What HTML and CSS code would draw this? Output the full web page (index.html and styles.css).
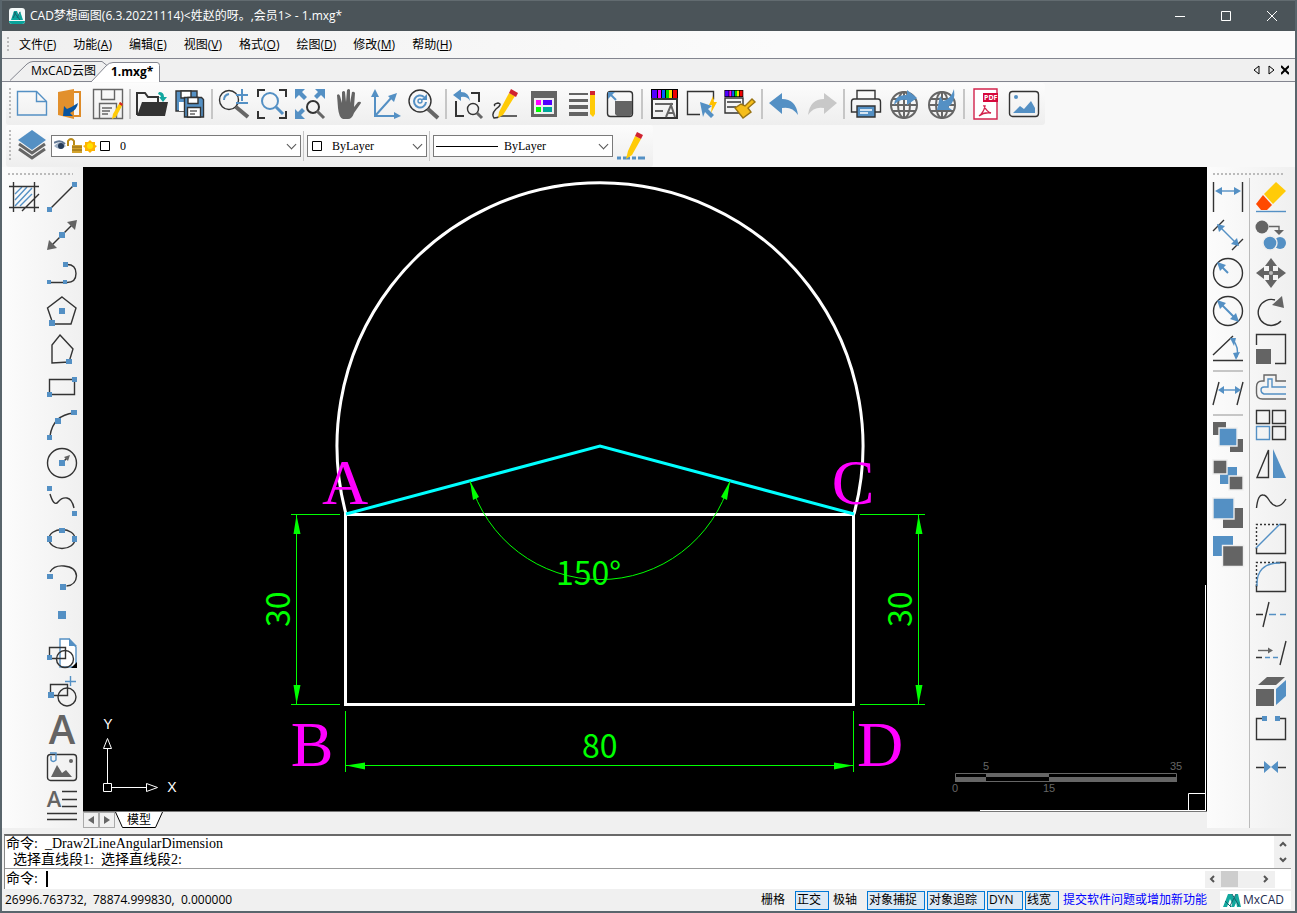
FILE: index.html
```html
<!DOCTYPE html>
<html lang="zh-CN">
<head>
    <meta charset="UTF-8">
    <meta name="viewport" content="width=device-width, initial-scale=1.0">
    <title>CAD梦想画图</title>
    <link rel="stylesheet" href="styles.css">
</head>
<body>

    <header class="titlebar">
        <svg class="app-icon" viewBox="0 0 16 16"><rect width="16" height="16" rx="3" fill="#f4f8f8"/><path d="M2 12L5 3h3l2 5 1-5 3 9z" fill="#0aa39b"/><path d="M4 10l3-6M8 10l3-6M5 4l6 8" stroke="#17606b"/><path d="M0 13h16a3 3 0 0 1-3 3H3a3 3 0 0 1-3-3z" fill="#0aa39b"/></svg>
        <h1>CAD梦想画图(6.3.20221114)&lt;姓赵的呀。,会员1&gt; - 1.mxg*</h1>
        <div class="window-buttons">
            <button aria-label="最小化"><svg viewBox="0 0 12 12"><path d="M1 6.5h10"/></svg></button>
            <button aria-label="最大化"><svg viewBox="0 0 12 12"><path d="M1.5 1.5h9v9h-9z"/></svg></button>
            <button aria-label="关闭"><svg viewBox="0 0 12 12"><path d="M1 1l10 10M11 1L1 11"/></svg></button>
        </div>
    </header>

    <nav class="menubar">
        <span class="grip"></span>
        <button>文件(<u>F</u>)</button>
        <button>功能(<u>A</u>)</button>
        <button>编辑(<u>E</u>)</button>
        <button>视图(<u>V</u>)</button>
        <button>格式(<u>O</u>)</button>
        <button>绘图(<u>D</u>)</button>
        <button>修改(<u>M</u>)</button>
        <button>帮助(<u>H</u>)</button>
    </nav>

    <div class="tabs">
        <button class="tab"><svg viewBox="0 0 97 20"><path d="M0 19.5L17 3q3-2.500 6-2.500h69l5 4" fill="#f0f0f0"/></svg><span>MxCAD云图</span></button>
        <button class="tab active"><svg viewBox="0 0 71 20"><path d="M0 20L15 4q3-3.500 7-3.500h44q2.500 0 2.500 3v16.500" fill="#fff"/></svg><span>1.mxg*</span></button>
        <div class="tab-tools">
            <button aria-label="上一个"><svg viewBox="0 0 8 10"><path d="M6 1v8L1 5z"/></svg></button>
            <button aria-label="下一个"><svg viewBox="0 0 8 10"><path d="M2 1v8l5-4z"/></svg></button>
            <button aria-label="关闭标签"><svg viewBox="0 0 8 10"><path d="M0 1l8 8M8 1L0 9" stroke-width="2"/></svg></button>
        </div>
    </div>

    <!-- Barra principal -->
    <div class="toolbars">
        <div class="toolbar">
            <span class="grip"></span>
            <button aria-label="新建"><svg viewBox="0 0 30 30"><path class="bl" fill="#fff" d="M.5 2.500h19l10 10v13.500H.5z"/><path class="bl" d="M19.500 2.500v10h10"/></svg></button>
            <button aria-label="打开"><svg viewBox="0 0 30 30"><path d="M19 3h6v24h-8" fill="#f7f7f7" stroke="#de8b28" stroke-width="2"/><path d="M3 3L19 0v30L3 26z" fill="#e2902d"/><path d="M23 14q-1 7-8 10l3 3-10 0 1-10 3 3q5-2 11-6z" fill="#07549f"/></svg></button>
            <button aria-label="保存"><svg viewBox="0 0 30 30"><path class="gl" d="M.5.5h29v29H.5zM8.500.500v10h13v-10M6.500 29.500v-15h17v15M9 19h10M9 22h8M9 25h6"/><path d="M27 13l3 2-7 13-4 2 1-5z" fill="#ffcb08"/><path d="M27 13l3 2-1 2-3-2z" fill="#d02330"/></svg></button>
            <span class="sep"></span>
            <button aria-label="打开云图"><svg viewBox="0 0 30 30"><path class="kl thick" d="M0 26V4h8l3 4h10v5"/><path d="M5 13h26l-3 14H0z" fill="#333"/><path d="M22 3q5 0 5 5h3l-4 5-4-5h2q0-2-3-3z" fill="#11a7a0"/></svg></button>
            <button aria-label="另存为"><svg viewBox="0 0 30 30"><path class="b" stroke="#333" d="M1 2h21v20H1z"/><path d="M6 2h10v7H6z" fill="#fff" stroke="#333"/><path d="M4 13h6v9H4z" fill="#fff"/><path class="b" stroke="#333" d="M9.500 8.500h17l2 2V28h-19z"/><path fill="#fff" stroke="#333" d="M13 8.500h10v6H13zM12.500 18.500h13V28h-13z"/><path class="gl" d="M15 22h7M15 25h5"/></svg></button>
            <span class="sep"></span>
            <button aria-label="缩放"><svg viewBox="0 0 30 30"><circle class="kl" cx="10" cy="11" r="9.500"/><path d="M17 18l12 10" stroke="#666" stroke-width="4"/><path class="bl" stroke-width="2" d="M5 11q0-5 5-6M17 6h12M23 0v12M17 14h12"/></svg></button>
            <button aria-label="窗口缩放"><svg viewBox="0 0 30 30"><path class="kl thick" d="M1 8V1h7M22 1h7v7M29 22v7h-7M8 29H1v-7"/><circle class="bl" stroke-width="2" cx="13" cy="12" r="8"/><path class="bl" stroke-width="3" d="M19 18l7 7"/></svg></button>
            <button aria-label="全部显示"><svg viewBox="0 0 30 30"><path class="b" d="M0 0h10L7 3l5 5-3 3-5-5-4 4zM30 0H20l3 3-4 4 3 3 4-4 4 4zM0 30V20l3 3 4-4 3 3-4 4 4 4z"/><circle class="kl thick" cx="18" cy="18" r="6"/><path d="M22 22l7 7" stroke="#666" stroke-width="3"/></svg></button>
            <button aria-label="平移"><svg viewBox="0 0 30 30"><path class="g" d="M5 19L4 6q2-2 3 1l2 7L9 3q2-2 3 0l1 10 1-12q2-2 3 0v13l2-11q2-1 3 1l-1 14 4-5q3-1 3 1l-7 10q-2 6-6 6h-5q-4-1-5-11z"/></svg></button>
            <button aria-label="坐标"><svg viewBox="0 0 30 30"><path class="bl" stroke-width="2" d="M4 7v20h20M4 27L21 8"/><path class="b" d="M4 0L0 8h8zM30 27l-7-4v7zM26 4l-9 3 6 6z"/></svg></button>
            <button aria-label="重生成"><svg viewBox="0 0 30 30"><circle class="kl" cx="11" cy="12" r="11"/><path d="M19 20l10 9" stroke="#666" stroke-width="4"/><path class="bl" stroke-width="2" d="M15 8a6 6 0 1 0 2 5"/><circle class="bl" cx="11" cy="12" r="2"/><path class="b" d="M18 5v6h-6z"/></svg></button>
            <span class="sep"></span>
            <button aria-label="上一视图"><svg viewBox="0 0 30 30"><path class="kl thick" d="M18 4h8v9M3 12v15h8"/><path class="b" d="M0 6L8 0v3q8 0 9 9-3-5-9-4v4z"/><circle class="kl" cx="20" cy="20" r="5.500"/><path d="M24 24l5 5" stroke="#666" stroke-width="3"/></svg></button>
            <button aria-label="草图"><svg viewBox="0 0 30 30"><path class="kl" d="M4 17q-2-2 3-3 5 1-2 6-5 5-2 9 4 0 6-2h17"/><path d="M18 4l6 3-12 19-5 3 1-6z" fill="#ffcb08"/><path d="M20 0l7 4-2 4-7-4z" fill="#d02330"/></svg></button>
            <button aria-label="特性"><svg viewBox="0 0 30 30"><path class="g" d="M2 2h26v26H2z"/><path fill="#eee" d="M5 9h20v16H5z"/><path fill="#f0f" d="M7 11h5v5H7z"/><path fill="#5000ff" d="M14 11h9v5h-9z"/><path fill="#0f0" d="M7 18h5v5H7z"/><path fill="#00a69b" d="M14 18h9v5h-9z"/></svg></button>
            <button aria-label="线宽设置"><svg viewBox="0 0 30 30"><path class="g" d="M2 4h19v2H2zM2 10h19v3H2zM2 16h19v4H2zM2 23h19v4H2z"/><path fill="#ffcb08" d="M23 6h5v19l-2 3-3-3z"/><path fill="#d02330" d="M23 2h5v4h-5z"/></svg></button>
            <button aria-label="尺寸"><svg viewBox="0 0 30 30"><rect class="kl" x="2.500" y="2.500" width="25" height="25" rx="3"/><path class="g" d="M10 12h17v13l-2 2H12l-2-2z"/><path class="bl" stroke-width="2" d="M5 5l6 6"/><path class="b" d="M3 3h7l-7 7z"/></svg></button>
            <span class="sep"></span>
            <button aria-label="颜色文字"><svg viewBox="0 0 30 30"><use href="#spectrum"/><path class="kl thick" d="M3 10h25v19H3z"/><path class="gl" stroke-width="2" d="M6 15h18M6 22h8M17 28l5-12 4 12M19 24h6"/></svg></button>
            <button aria-label="快速选择"><svg viewBox="0 0 30 30"><path class="kl" d="M13 25.500H.5v-23h26v8"/><path class="b" d="M13 13l12 4-4 3 6 6-3 3-6-6-2 5z"/><path fill="#ffc000" d="M26 7l-4 9h3l-1 8 6-11h-3z"/></svg></button>
            <button aria-label="格式刷"><svg viewBox="0 0 30 30"><g transform="translate(-2 1) scale(.7)"><use href="#spectrum"/></g><path class="kl" d="M0 9h18v15H0z"/><path class="gl" stroke-width="2" d="M2 13h14M2 18h9"/><path d="M27 10l3 3-7 6 3 4-8 6-8-10 6-4 4 2z" fill="#f5bd19" stroke="#9a7412"/></svg></button>
            <span class="sep"></span>
            <button aria-label="撤销"><svg viewBox="0 0 30 30"><path class="b" d="M0 14L13 4v6q14 0 16 16-6-9-16-7v6z"/></svg></button>
            <button aria-label="重做"><svg viewBox="0 0 30 30"><path fill="#c8c8c8" d="M30 14L17 4v6Q3 10 1 26q6-9 16-7v6z"/></svg></button>
            <span class="sep"></span>
            <button aria-label="打印"><svg viewBox="0 0 30 30"><path class="kl" d="M6 10V1.500h18V10M3 10h24q2.500 0 2.500 3v10H.5V13q0-3 2.500-3z"/><path class="b" stroke="#333" d="M6 17h18v11H6z"/><path stroke="#fff" d="M9 21h12M9 24h8"/></svg></button>
            <button aria-label="上传"><svg viewBox="0 0 30 30"><use href="#globe"/><path class="b" d="M5 16Q6 5 18 6V1l10 8-10 7v-5q-8-1-13 5z"/></svg></button>
            <button aria-label="下载"><svg viewBox="0 0 30 30"><use href="#globe"/><path class="b" d="M27 0q2 13-6 18l4 3H10l3-14 3 5q8-2 11-12z"/></svg></button>
            <span class="sep"></span>
            <button aria-label="输出 PDF"><svg viewBox="0 0 30 30"><path d="M3 0h23v30H3z" fill="#fff" stroke="#d2234c"/><path d="M12 4h15v9H12z" fill="#d6083b"/><text class="pdf" x="13" y="11">PDF</text><path d="M14 17q-1 6-6 10 5-4 12-3-4-1-7-7z" fill="none" stroke="#d2234c"/></svg></button>
            <button aria-label="输出图片"><svg viewBox="0 0 30 30"><rect class="kl" x=".5" y="2.500" width="29" height="25" rx="3"/><circle class="b" cx="7" cy="8" r="2"/><path class="b" d="M4 24l7-7 4 3 7-8 4 7v5z"/></svg></button>
        </div>

        <div class="toolbar layers">
            <span class="grip"></span>
            <button aria-label="图层"><svg viewBox="0 0 30 30"><path d="M2 18l13 9 13-9M2 13l13 9 13-9" fill="none" stroke="#666" stroke-width="3"/><path class="b" d="M1 9L15-1 29 9 15 19z"/></svg></button>
            <div class="combo combo-layer">
                <svg class="combo-icons" viewBox="0 0 60 16"><path d="M0 8q6-7 12 0-6 6-12 0z" fill="#9fb1c6"/><circle cx="7" cy="8" r="3" fill="#263c5a"/><path d="M0 5q6-4 11 1" fill="none" stroke="#627894" stroke-width="2"/><path d="M14 8V3q3-4 6 0v5" fill="none" stroke="#b98a19" stroke-width="2"/><path d="M18 7h10v8H18z" fill="#d3a32d"/><path d="M18 9h10M18 12h10" stroke="#8a650f"/><path d="M36 2l2 2h3v3l2 1-2 2v3h-3l-2 2-2-2h-3v-3l-2-2 2-1V4h3z" fill="#ffb400"/><circle cx="36" cy="8" r="3" fill="#ffe100"/><path d="M46.500 3.500h9v9h-9z" fill="#fff" stroke="#000"/></svg>
                <select aria-label="当前图层"><option>0</option></select>
            </div>
            <span class="sep"></span>
            <div class="combo combo-color">
                <svg class="combo-icons" viewBox="0 0 12 16"><path d="M2.500 3.500h9v9h-9z" fill="#fff" stroke="#000"/></svg>
                <select aria-label="颜色"><option>ByLayer</option></select>
            </div>
            <span class="sep"></span>
            <div class="combo combo-line">
                <svg class="combo-icons" viewBox="0 0 62 16"><path d="M0 8.500h62" stroke="#000"/></svg>
                <select aria-label="线型"><option>ByLayer</option></select>
            </div>
            <button aria-label="线型编辑"><svg viewBox="0 0 30 30"><path stroke="#5490c4" stroke-width="3" stroke-dasharray="4 2 7 2" d="M0 27h30"/><path d="M18 5l6 3-9 16-6 4 2-8z" fill="#ffcb08"/><path d="M20 1l6 3-2 4-6-3z" fill="#d02330"/></svg></button>
        </div>
    </div>

    <main class="workspace">
        <aside class="side left">
            <span class="grip-h"></span>
            <div class="tool-column">
                <button aria-label="填充"><svg viewBox="0 0 30 30"><path class="bl" d="M6 12l7-7M6 18L18 5M6 24L23 6M11 24l12-12"/><path class="kl" d="M0 4.500h30M0 25.500h30M4.500 0v30M25.500 0v30M13 29L30 12"/></svg></button>
            </div>
            <div class="tool-column">
                <button aria-label="直线"><svg viewBox="0 0 30 30"><path class="kl" d="M3 27L27 3"/><path class="b" d="M0 25h5v5H0zM25 0h5v5h-5z"/></svg></button>
                <button aria-label="构造线"><svg viewBox="0 0 30 30"><path class="kl" d="M3 27L27 3"/><path class="g" d="M0 30l2-10 8 8zM30 0l-2 10-8-8z"/><path class="b" d="M12 12h6v6h-6z"/></svg></button>
                <button aria-label="多段线"><svg viewBox="0 0 30 30"><path class="kl" d="M2 24.500h18q9 0 9-9t-9-9h-2"/><path class="b" d="M0 22h4v4H0zM16 22h4v4h-4zM16 4h5v5h-5z"/></svg></button>
                <button aria-label="正多边形"><svg viewBox="0 0 30 30"><path class="kl" d="M15 1l14 11-5 16H6L.500 12z"/><path class="b" d="M12 12h6v6h-6zM2 24h6v6H2z"/></svg></button>
                <button aria-label="多边形"><svg viewBox="0 0 30 30"><path class="kl" d="M13 1l13 14-4 13-17 1V11z"/><path class="b" d="M19 25h6v5h-6z"/></svg></button>
                <button aria-label="矩形"><svg viewBox="0 0 30 30"><path class="kl" d="M2.500 7.500h25v15h-25z"/><path class="b" d="M0 20h5v5H0zM25 5h5v5h-5z"/></svg></button>
                <button aria-label="圆弧"><svg viewBox="0 0 30 30"><path class="kl" d="M3 26Q6 5 27 3"/><path class="b" d="M0 25h5v5H0zM8 8h6v6H8zM24 0h6v5h-6z"/></svg></button>
                <button aria-label="圆"><svg viewBox="0 0 30 30"><circle class="kl" cx="15" cy="15" r="14.500"/><path class="kl" d="M15 15l6-6"/><path class="g" d="M23 7l-2 6-4-4z"/><path class="b" d="M12 12h6v6h-6z"/></svg></button>
                <button aria-label="样条曲线"><svg viewBox="0 0 30 30"><path class="kl" d="M3 8q4 13 8 8t9-4 7 10"/><path class="b" d="M0 0h5v5H0zM25 25h5v5h-5z"/></svg></button>
                <button aria-label="椭圆"><svg viewBox="0 0 30 30"><ellipse class="kl" cx="15" cy="15" rx="13" ry="9.500"/><path class="b" d="M0 12h5v6H0zM12 4h6v5h-6zM25 12h5v6h-5z"/></svg></button>
                <button aria-label="椭圆弧"><svg viewBox="0 0 30 30"><path class="kl" d="M3 10q4-7 14-6 12 1 12.500 10-.5 9-10 10"/><path class="b" d="M0 12h6v5H0zM13 22h6v6h-6z"/></svg></button>
                <button aria-label="点"><svg viewBox="0 0 30 30"><path class="b" d="M11 11h8v8h-8z"/></svg></button>
                <button aria-label="插入块"><svg viewBox="0 0 30 30"><path d="M13 1h9l7 8v20H13z" fill="#fff" stroke="#5490c4"/><path class="b" d="M22 0v8h8z"/><path class="kl" d="M2.500 9.500h16v11h-16z"/><circle class="kl" cx="18" cy="21" r="8.500"/><path class="b" d="M0 17h5v5H0z"/><path d="M30 24v6h-6z"/></svg></button>
                <button aria-label="创建块"><svg viewBox="0 0 30 30"><path class="kl" d="M3.500 8.500h17v11h-17z"/><circle class="kl" cx="20" cy="21" r="9"/><path class="bl" d="M18 5.500h11M23.500 0v10"/><path class="b" d="M1 16h6v6H1z"/></svg></button>
                <button aria-label="单行文字"><svg viewBox="0 0 30 30"><text class="big-a" x="15" y="30">A</text></svg></button>
                <button aria-label="附着图片"><svg viewBox="0 0 30 30"><rect class="kl" x=".5" y="2.500" width="29" height="26" rx="3"/><path class="g" d="M4 25l6-12 5 8 4-3 6 7z"/><circle class="g" cx="24" cy="9" r="2"/><path class="bl" d="M3 1h6v7q-3 3-5 0V4"/></svg></button>
                <button aria-label="多行文字"><svg viewBox="0 0 30 30"><text class="small-a" x="7" y="17">A</text><path class="kl" d="M15 1.500h15M15 9.500h15M15 16.500h15M0 23.500h30M0 29.500h30"/></svg></button>
            </div>
        </aside>

        <section class="drawing">
            <svg class="canvas" viewBox="83 167 1124 644">
                <!-- geometría -->
                <path class="white" d="M346 514A263 263 0 1 1 854 514M345.500 514.500h508v190h-508z"/>
                <path class="cyan" d="M346 514l254-68 254 68"/>
                <!-- cotas -->
                <path class="dim" d="M291 514.500h49M291 704.500h49M296.500 515v189M860 514.500h65M860 704.500h65M918.500 515v189M345.500 711v61M853.500 711v61M346 765.500h507M470 481A135 135 0 0 0 730 481"/>
                <path class="arrow" d="M296.500 515l4 19h-7zM296.500 704l4-19h-7zM918.500 515l4 19h-7zM918.500 704l4-19h-7zM346 765.500l19-3v7zM853 765.500l-19-3v7zM470 481l9 16-6 3zM730 481l-9 16 6 3z"/>
                <text class="measure" x="556" y="585">150°</text>
                <text class="measure" x="582" y="758">80</text>
                <text class="measure" transform="translate(290 627) rotate(-90)">30</text>
                <text class="measure" transform="translate(912 627) rotate(-90)">30</text>
                <text class="label" x="345" y="504">A</text>
                <text class="label" x="312" y="766">B</text>
                <text class="label" x="853" y="504">C</text>
                <text class="label" x="880" y="766">D</text>
                <!-- ejes -->
                <path class="axis" d="M103.500 783.500h8v8h-8zM107.500 783v-34M112 787.500h34M107.500 738.500l-4 10h8zM157.500 787.500l-11-4v8z"/>
                <text class="axis-name" x="108" y="729">Y</text>
                <text class="axis-name" x="172" y="792">X</text>
                <!-- escala -->
                <path class="scale" d="M955.500 773.500h221v8h-221z"/>
                <path class="scale-fill" d="M955 777h31v5h-31zM986 773h63v4h-63zM1049 777h128v5h-128z"/>
                <text class="scale-text" x="986" y="770">5</text>
                <text class="scale-text" x="1176" y="770">35</text>
                <text class="scale-text" x="955" y="792">0</text>
                <text class="scale-text" x="1049" y="792">15</text>
                <path class="axis" d="M1205.500 585v226M980 810.500h226M1188.500 810v-16.500h17"/>
            </svg>
            <div class="model-bar">
                <button class="arrow-btn" aria-label="向左"><svg viewBox="0 0 6 8"><path d="M6 0v8L0 4z"/></svg></button>
                <button class="arrow-btn" aria-label="向右"><svg viewBox="0 0 6 8"><path d="M0 0v8l6-4z"/></svg></button>
                <button class="model-tab"><svg viewBox="0 0 48 16"><path d="M.500 0l7 15.500h33L47.500 0" fill="#fff" stroke="#000"/></svg><span>模型</span></button>
            </div>
        </section>

        <aside class="side right">
            <span class="grip-h"></span>
            <div class="tool-column">
                <button aria-label="线性标注"><svg viewBox="0 0 30 30"><path class="kl" d="M.500 0v30M29.500 0v30"/><path class="bl" d="M5 9h20"/><path class="b" d="M2 9l7-4v8zM28 9l-7-4v8z"/></svg></button>
                <button aria-label="对齐标注"><svg viewBox="0 0 30 30"><path class="kl" d="M0 11L11 0M19 30l11-11"/><path class="bl" d="M6 6l18 18"/><path class="b" d="M4 4l8 2-6 6zM26 26l-2-8-6 6z"/></svg></button>
                <button aria-label="半径标注"><svg viewBox="0 0 30 30"><circle class="kl" cx="15" cy="15" r="14.500"/><path class="bl" stroke-width="2" d="M15 15L7 7"/><path class="b" d="M4 4l9 3-6 6z"/></svg></button>
                <button aria-label="直径标注"><svg viewBox="0 0 30 30"><circle class="kl" cx="15" cy="15" r="14.500"/><path class="bl" stroke-width="2" d="M7 7l16 16"/><path class="b" d="M4 4l9 3-6 6zM26 26l-3-9-6 6z"/></svg></button>
                <button aria-label="角度标注"><svg viewBox="0 0 30 30"><path class="kl" d="M0 21L20 2M0 26.500h30"/><path class="bl" d="M20 6q6 7 4 17"/><path class="b" d="M17 4h6l-2 8zM20 19l7-1-4 8z"/></svg></button>
                <span class="sep-h"></span>
                <button aria-label="旋转标注"><svg viewBox="0 0 30 30"><path class="kl" d="M0 27L6 4M24 27l6-23"/><path class="bl" d="M7 12h17"/><path class="b" d="M5 12l6-4v8zM28 12l-6-4v8z"/></svg></button>
                <span class="sep-h"></span>
                <button aria-label="置前"><svg viewBox="0 0 30 30"><path class="g" d="M0 0h13v13H0zM17 17h13v13H17z"/><path class="b" stroke="#eee" d="M6 6h18v18H6z"/></svg></button>
                <button aria-label="置后"><svg viewBox="0 0 30 30"><path class="b" d="M7 7h17v17H7z"/><path class="g" stroke="#eee" d="M0 0h14v14H0zM16 16h14v14H16z"/></svg></button>
                <button aria-label="置于对象之上"><svg viewBox="0 0 30 30"><path class="g" d="M10 10h20v20H10z"/><path class="b" stroke="#eee" d="M0 0h21v21H0z"/></svg></button>
                <button aria-label="置于对象之下"><svg viewBox="0 0 30 30"><path class="b" d="M0 0h20v20H0z"/><path class="g" stroke="#eee" d="M9.500 9.500h21v21h-21z"/></svg></button>
            </div>
            <div class="tool-column ruled">
                <button aria-label="删除"><svg viewBox="0 0 30 30"><path d="M20 0l10 9-13 13-9-10z" fill="#ffcb08"/><path d="M7 13l9 10-5 5H5l-5-6z" fill="#ff4a00"/><path class="bl" d="M0 29.500h30"/></svg></button>
                <button aria-label="复制"><svg viewBox="0 0 30 30"><circle class="g" cx="6" cy="7" r="6.500"/><path class="gl" d="M13 6.500h10v5"/><path class="g" d="M18 10h10l-5 5z"/><circle class="b" cx="24" cy="23" r="6"/><circle class="b" stroke="#eee" cx="14" cy="23" r="7"/></svg></button>
                <button aria-label="移动"><svg viewBox="0 0 30 30"><path class="g" d="M15 0l6 8h-4v5h5V9l8 6-8 6v-4h-5v5h4l-6 8-6-8h4v-5H8v4l-8-6 8-6v4h5V8H9z"/><circle cx="15" cy="15" r="2" fill="#bbb"/></svg></button>
                <button aria-label="旋转"><svg viewBox="0 0 30 30"><path class="kl" d="M19 4a13 13 0 1 0 6 21"/><path class="g" d="M16 9L26 0l2 12z"/></svg></button>
                <button aria-label="缩放对象"><svg viewBox="0 0 30 30"><path class="kl" d="M.500 11V.500h29v29H19"/><path class="g" d="M0 15h15v15H0z"/></svg></button>
                <button aria-label="偏移"><svg viewBox="0 0 30 30"><path class="gl" d="M30 9H20V3H8v6H6Q.500 9 .500 15v6q0 6 6 6H30"/><path class="bl" d="M30 15h-14V7h-4v8H8q-3 0-3 3t3 4h22"/></svg></button>
                <button aria-label="阵列"><svg viewBox="0 0 30 30"><path class="kl" d="M.500.500h13v13H.500zM16.500.500h13v13h-13zM16.500 16.500h13v13h-13z"/><path class="bl" d="M.500 16.500h13v13H.500z"/></svg></button>
                <button aria-label="镜像"><svg viewBox="0 0 30 30"><path class="kl" d="M1 29.500L12.500 2v27.500z"/><path class="b" d="M17 1l13 29H17z"/></svg></button>
                <button aria-label="曲线编辑"><svg viewBox="0 0 30 30"><path class="kl" d="M.500 22Q2 8 7 9q3 0 6 5t7 6q5 1 10-7"/></svg></button>
                <button aria-label="倒角"><svg viewBox="0 0 30 30"><path class="kl" stroke-dasharray="2 2" d="M.500 25V.500h24"/><path class="kl" d="M24 .500h5.500v29H.500V24"/><path class="bl" d="M0 24L24 0"/></svg></button>
                <button aria-label="圆角"><svg viewBox="0 0 30 30"><path class="kl" stroke-dasharray="2 2" d="M.500 25V.500h24"/><path class="kl" d="M22 .500h7.500v29H.500V22"/><path class="bl" d="M1 24Q0 1 24 1"/></svg></button>
                <button aria-label="修剪"><svg viewBox="0 0 30 30"><path class="kl" d="M0 14.500h7M7 27l6-25"/><path class="bl" d="M13 14.500h7M24 14.500h6"/></svg></button>
                <button aria-label="延伸"><svg viewBox="0 0 30 30"><path class="kl" d="M0 19.500h6M24 27l6-24"/><path class="gl" d="M2 12.500h12"/><path class="g" d="M17 12.500l-5-3v6z"/><path class="bl" d="M9 19.500h5M17 19.500h5"/></svg></button>
                <button aria-label="分解"><svg viewBox="0 0 30 30"><path class="g" d="M0 13h18v17H0zM2 9l9-8h18l-9 8z"/><path class="b" d="M20 13L30 4v16l-10 9z"/></svg></button>
                <button aria-label="打断"><svg viewBox="0 0 30 30"><path class="kl" d="M6 4.500H.500v21h29v-21H24"/><path class="b" d="M6 2h5v5H6zM19 2h5v5h-5z"/></svg></button>
                <button aria-label="合并"><svg viewBox="0 0 30 30"><path class="kl" d="M0 15.500h9M21 15.500h9"/><path class="b" d="M8 9l7 6-7 6zM22 9l-7 6 7 6z"/></svg></button>
            </div>
        </aside>
    </main>

    <section class="console">
        <div class="log">
            <p>命令:&nbsp; _Draw2LineAngularDimension</p>
            <p>&nbsp; 选择直线段1:&nbsp; 选择直线段2:</p>
            <div class="scroll-v">
                <svg viewBox="0 0 8 6"><path d="M1 5l3-3 3 3"/></svg>
                <svg viewBox="0 0 8 6"><path d="M1 1l3 3 3-3"/></svg>
            </div>
        </div>
        <div class="prompt">
            <label for="cmd">命令:</label>
            <span class="caret"></span>
            <input id="cmd" type="text">
            <div class="scroll-h">
                <svg viewBox="0 0 6 8"><path d="M5 1L2 4l3 3"/></svg>
                <span class="thumb"></span>
                <svg viewBox="0 0 6 8"><path d="M1 1l3 3-3 3"/></svg>
            </div>
        </div>
    </section>

    <footer class="status">
        <span class="coords">26996.763732,&nbsp; 78874.999830,&nbsp; 0.000000</span>
        <button class="toggle">栅格</button>
        <button class="toggle on">正交</button>
        <button class="toggle">极轴</button>
        <button class="toggle on wide">对象捕捉</button>
        <button class="toggle on wide">对象追踪</button>
        <button class="toggle on dyn">DYN</button>
        <button class="toggle on">线宽</button>
        <a href="#">提交软件问题或增加新功能</a>
        <div class="brand">
            <svg viewBox="0 0 18 14"><path d="M0 14L5 1h4l4 9-2 4-4-8-3 8z" fill="#13a89e"/><path d="M8 14l5-13h2l3 13h-4l-1-6-2 6z" fill="#13a89e"/><path d="M2 8l6 6M9 1l7 12M13 1L7 13" stroke="#17606b"/></svg>
            <span>MxCAD</span>
        </div>
    </footer>

    <svg class="defs" width="0" height="0">
        <defs>
            <g id="spectrum">
                <path d="M2 0h27v10H2z"/><path fill="#5000ff" d="M3 1h5v8H3z"/><path fill="#f0f" d="M9 1h3v8H9z"/><path fill="#0060ff" d="M13 1h3v8h-3z"/><path fill="#0d0" d="M17 1h3v8h-3z"/><path fill="#fd0" d="M20 1h3v8h-3z"/><path fill="#e00" d="M24 1h4v8h-4z"/>
            </g>
            <g id="globe" fill="none" stroke="#666" stroke-width="2">
                <circle cx="15" cy="16" r="13"/><ellipse cx="15" cy="16" rx="6" ry="13"/><path d="M15 3v26M2 16h26M4 10h22M4 22h22"/>
            </g>
        </defs>
    </svg>

</body>
</html>
```
FILE: styles.css
```css
* {
    box-sizing: border-box;
}

body {
    margin: 0;
    min-height: 100vh;
    display: flex;
    flex-direction: column;
    background-color: #f0f0f0;
    border: 2px solid #59656c;
    border-top: 0;
    color: #000;
    font-family: "Open Sans", "Noto Sans CJK SC", sans-serif;
    font-size: 12px;
    line-height: 16px;
}

button {
    border: 0;
    padding: 0;
    background: none;
    color: inherit;
    font: inherit;
}

svg {
    display: block;
}

/* Título */
.titlebar {
    height: 31px;
    display: flex;
    align-items: center;
    gap: 5px;
    padding-left: 7px;
    background-color: #4b5459;
    border-top: 1px solid #626b70;
    color: #fff;
}

.titlebar h1 {
    margin: 0;
    font-size: 12px;
    font-weight: normal;
}

.app-icon {
    width: 16px;
    height: 16px;
}

.window-buttons {
    margin-left: auto;
    display: flex;
}

.window-buttons button {
    width: 46px;
    height: 30px;
    display: grid;
    place-items: center;
}

.window-buttons svg {
    width: 12px;
    height: 12px;
    fill: none;
    stroke: #fff;
}

/* Menú */
.menubar {
    height: 28px;
    display: flex;
    align-items: center;
    gap: 1px;
    padding-left: 5px;
    background: linear-gradient(90deg, #f0f0f0, #fbfbfb 60%);
    border-bottom: 1px solid #83858f;
}

.menubar button {
    padding: 0 8px;
}

.menubar .grip {
    height: 15px;
    margin-right: 1px;
}

.grip {
    width: 2px;
    height: 32px;
    background: repeating-linear-gradient(#bbb 0 2px, transparent 2px 4px);
}

.grip-h {
    height: 2px;
    margin: 6px 8px 3px 6px;
    background: repeating-linear-gradient(90deg, #bbb 0 2px, transparent 2px 4px);
}

/* Pestañas */
.tabs {
    height: 23px;
    display: flex;
    align-items: flex-end;
    padding-left: 8px;
    border-bottom: 1px solid #83858f;
}

.tab {
    position: relative;
    width: 97px;
    height: 20px;
    padding-left: 21px;
    text-align: left;
    white-space: nowrap;
}

.tab svg {
    position: absolute;
    inset: 0;
    width: 100%;
    height: 20px;
    stroke: #83858f;
}

.tab span {
    position: relative;
}

.tab.active {
    width: 71px;
    margin: 0 0 -1px -16px;
    padding-left: 20px;
    font-weight: bold;
}

.tab-tools {
    margin: 0 6px 6px auto;
    display: flex;
    gap: 6px;
}

.tab-tools svg {
    width: 8px;
    height: 10px;
    fill: none;
    stroke: #000;
}

/* Barras de herramientas */
.toolbars {
    display: flex;
    flex-direction: column;
    align-items: flex-start;
    background-color: #f8f8f8;
    padding: 1px 0 0 4px;
}

.toolbar {
    height: 42px;
    display: flex;
    align-items: center;
    padding: 0 2px 0 3px;
    background: linear-gradient(#fcfcfc, #eee);
    border-radius: 3px;
}

.toolbar .grip {
    margin-right: 2px;
}

.toolbar button {
    width: 38px;
    height: 38px;
    display: grid;
    place-items: center;
}

.toolbar button svg,
.side button svg {
    width: 30px;
    height: 30px;
    overflow: visible;
    stroke-width: 1.4;
}

.sep {
    width: 2px;
    height: 30px;
    margin: 0 2px;
    background-color: #c6c6c6;
}

.combo {
    position: relative;
    height: 22px;
}

.combo-icons {
    position: absolute;
    top: 3px;
    left: 3px;
    height: 16px;
}

.combo select {
    appearance: none;
    width: 100%;
    height: 22px;
    border: 1px solid #7a7a7a;
    border-radius: 0;
    background: #fff;
    color: #000;
    font-family: "Liberation Serif", "Noto Sans CJK SC", serif;
    font-size: 12px;
}

.combo::after {
    content: "";
    position: absolute;
    top: 6px;
    right: 6px;
    width: 6px;
    height: 6px;
    border: solid #555;
    border-width: 0 1px 1px 0;
    transform: rotate(45deg);
}

.layers .sep {
    width: 1px;
    margin: 0 3px 0 2px;
}

.combo-layer {
    width: 250px;
}

.combo-layer select {
    padding-left: 68px;
}

.combo-color {
    width: 120px;
}

.combo-color select {
    padding-left: 24px;
}

.combo-line {
    width: 180px;
}

.combo-line select {
    padding-left: 70px;
}

/* Trazos comunes de los iconos */
.kl {
    fill: none;
    stroke: #333;
}

.thick {
    stroke-width: 2;
}

.gl {
    fill: none;
    stroke: #666;
}

.bl {
    fill: none;
    stroke: #5490c4;
}

.b {
    fill: #5490c4;
}

.g {
    fill: #646464;
}

.pdf {
    fill: #fff;
    font-size: 7px;
    font-weight: bold;
}

.big-a,
.small-a {
    fill: #646464;
    font-size: 40px;
    font-weight: 600;
    text-anchor: middle;
}

.small-a {
    font-size: 22px;
}

/* Zona de trabajo */
.workspace {
    flex: 1;
    display: flex;
}

.side {
    display: grid;
    grid-template-rows: auto 1fr;
    margin-bottom: 2px;
    background: linear-gradient(90deg, #fcfcfc, #f0f0f0);
}

.side .grip-h {
    grid-column: 1 / -1;
}

.side.left {
    width: 81px;
    grid-template-columns: 38px 38px;
    padding-left: 3px;
}

.side.left .grip-h {
    margin-left: 3px;
}

.side.right {
    width: 85px;
    margin-right: 3px;
    grid-template-columns: 42px 43px;
}

.tool-column {
    display: flex;
    flex-direction: column;
    align-items: center;
}

.side button {
    width: 38px;
    height: 38px;
    display: grid;
    place-items: center;
}

.ruled {
    border-left: 1px solid #bbb;
}

.sep-h {
    width: 30px;
    height: 2px;
    margin: 2px 0;
    background-color: #c6c6c6;
}

/* Dibujo */
.drawing {
    flex: 1;
    min-width: 0;
    display: flex;
    flex-direction: column;
}

.canvas {
    flex: 1;
    width: 100%;
    min-height: 0;
    background-color: #000;
}

.white {
    fill: none;
    stroke: #fff;
    stroke-width: 3;
}

.cyan {
    fill: none;
    stroke: #0ff;
    stroke-width: 3;
}

.dim {
    fill: none;
    stroke: #0f0;
}

.arrow {
    fill: #0f0;
}

.measure {
    fill: #0f0;
    font-family: "Noto Sans CJK SC", sans-serif;
    font-size: 32px;
}

.label {
    fill: #f0f;
    font-family: "Liberation Serif", serif;
    font-size: 64px;
    text-anchor: middle;
}

.axis {
    fill: none;
    stroke: #fff;
}

.axis-name {
    fill: #fff;
    font-family: "Liberation Sans", sans-serif;
    font-size: 14px;
    text-anchor: middle;
}

.scale {
    fill: none;
    stroke: #666;
}

.scale-fill {
    fill: #666;
}

.scale-text {
    fill: #666;
    font-family: "Liberation Sans", sans-serif;
    font-size: 11px;
    text-anchor: middle;
}

.model-bar {
    height: 19px;
    display: flex;
    align-items: flex-start;
    border-top: 1px solid #777;
}

.arrow-btn {
    width: 16px;
    height: 16px;
    display: grid;
    place-items: center;
    border: 1px solid #aaa;
}

.arrow-btn svg {
    width: 6px;
    height: 8px;
    fill: #666;
}

.model-tab {
    position: relative;
    width: 48px;
    height: 16px;
    line-height: 16px;
}

.model-tab svg {
    position: absolute;
    inset: 0;
    width: 48px;
    height: 16px;
}

.model-tab span {
    position: relative;
}

/* Consola de comandos */
.console {
    margin: 4px 4px 0 2px;
    border-top: 2px solid #696969;
    border-left: 1px solid #888;
    background-color: #fff;
    font-family: "Liberation Serif", "Noto Sans CJK SC", serif;
    font-size: 14px;
}

.log {
    position: relative;
    padding-left: 1px;
    border-bottom: 1px solid #999;
}

.log p {
    margin: 0;
    line-height: 16px;
}

.scroll-v {
    position: absolute;
    top: 0;
    right: 0;
    bottom: 0;
    width: 17px;
    display: flex;
    flex-direction: column;
    justify-content: space-around;
    align-items: center;
    background-color: #f0f0f0;
}

.console svg {
    width: 8px;
    height: 8px;
    fill: none;
    stroke: #555;
    stroke-width: 2;
}

.prompt {
    height: 20px;
    display: flex;
    align-items: center;
    padding-left: 1px;
}

.caret {
    width: 2px;
    height: 16px;
    margin-left: 8px;
    background-color: #000;
}

.prompt input {
    flex: 1;
    border: 0;
    outline: 0;
    padding: 0;
    background: none;
    font: inherit;
}

.scroll-h {
    width: 70px;
    height: 17px;
    margin-right: 16px;
    display: flex;
    align-items: center;
    padding: 0 5px 0 3px;
    background-color: #f0f0f0;
}

.thumb {
    width: 17px;
    height: 16px;
    margin: 0 auto 0 5px;
    background-color: #cdcdcd;
}

/* Barra de estado */
.status {
    height: 22px;
    display: flex;
    align-items: center;
    padding: 0 4px 0 3px;
}

.coords {
    margin-right: auto;
}

.toggle {
    width: 34px;
    height: 19px;
    margin-right: 2px;
    padding-left: 1px;
    border: 1px solid transparent;
    line-height: 16px;
    text-align: left;
    white-space: nowrap;
}

.toggle.on {
    background-color: #dce9f5;
    border-color: #0078d7;
}

.toggle.wide {
    width: 58px;
}

.toggle.dyn {
    width: 36px;
}

.status a {
    margin: 0 13px 0 2px;
    color: #00f;
    text-decoration: none;
}

.brand {
    width: 71px;
    height: 18px;
    display: flex;
    align-items: center;
    gap: 2px;
    padding-left: 3px;
    background-color: #fff;
    color: #1d2b50;
}

.brand svg {
    width: 18px;
    height: 14px;
}

.defs {
    position: absolute;
}
```
